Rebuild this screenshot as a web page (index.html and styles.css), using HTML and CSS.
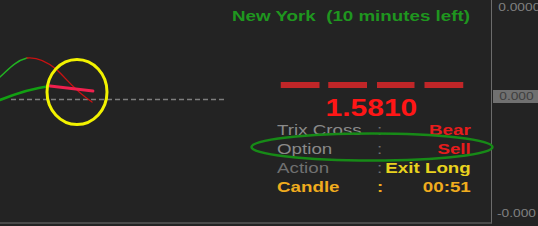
FILE: index.html
```html
<!DOCTYPE html>
<html>
<head>
<meta charset="utf-8">
<link rel="stylesheet" href="styles.css">
</head>
<body>
<div class="screen">
  <div class="plot">
    <svg class="lines" width="240" height="140" viewBox="0 0 240 140">
      <line x1="11" y1="99.5" x2="226" y2="99.5" class="zero"/>
      <path d="M0,77 C8,70 15,61 27,58" class="thin-green"/>
      <path d="M27,58 C36,57 46,61 56,69 C66,78 74,90 92,102" class="thin-red"/>
      <path d="M0,100 C15,94 34,88 50,86" class="thick-green"/>
      <path d="M50,86 L93,91" class="thick-pink"/>
      <ellipse cx="77" cy="92" rx="30" ry="32.5" class="ring-yellow"/>
    </svg>
    <div class="panel">
      <div class="title">New York&nbsp; (10 minutes left)</div>
      <div class="bars"><span></span><span></span><span></span><span></span></div>
      <div class="price">1.5810</div>
      <div class="rows">
        <div class="row"><span class="lbl">Trix Cross</span><span class="col">:</span><span class="val red">Bear</span></div>
        <div class="row"><span class="lbl">Option</span><span class="col">:</span><span class="val red">Sell</span></div>
        <div class="row"><span class="lbl dim">Action</span><span class="col">:</span><span class="val yellow">Exit Long</span></div>
        <div class="row gold"><span class="lbl">Candle</span><span class="col">:</span><span class="val">00:51</span></div>
      </div>
    </div>
    <svg class="ring" width="260" height="40" viewBox="0 0 260 40">
      <ellipse cx="130" cy="20" rx="120.5" ry="13.5"/>
    </svg>
  </div>
  <div class="axis">
    <div class="tick top">0.0000</div>
    <div class="tick current"><span>0.000</span></div>
    <div class="tick bottom">-0.000</div>
  </div>
</div>
</body>
</html>
```

FILE: styles.css
```css
html, body {
  margin: 0;
  padding: 0;
  background: #232323;
}
body {
  font-family: "Liberation Sans", Arial, sans-serif;
  overflow: hidden;
}
.screen {
  width: 538px;
  height: 226px;
  display: grid;
  grid-template-columns: 492px 46px;
  background: #232323;
}
.plot {
  position: relative;
  height: 224px;
  box-sizing: border-box;
  border-right: 1px solid #6c6c6c;
  border-bottom: 2px solid #4a4a4a;
}
.lines {
  position: absolute;
  left: 0;
  top: 0;
}
.lines path, .lines line, .lines ellipse { fill: none; stroke-linecap: round; }
.zero { stroke: #7d7d7d; stroke-width: 1.6; stroke-dasharray: 5 3; stroke-linecap: butt !important; }
.thin-green { stroke: #22b322; stroke-width: 1.5; }
.thin-red { stroke: #c81212; stroke-width: 1.4; }
.thick-green { stroke: #12a012; stroke-width: 2.6; }
.thick-pink { stroke: #f0204e; stroke-width: 2.8; }
.ring-yellow { stroke: #f2f200; stroke-width: 3; }

.ring {
  position: absolute;
  left: 242px;
  top: 127px;
}
.ring ellipse { fill: none; stroke: #178a17; stroke-width: 2.5; }

.panel {
  margin-left: 232px;
  padding-top: 7px;
  width: 223px;
  transform: scaleX(1.25);
  transform-origin: 0 0;
}
.title {
  font-size: 15px;
  line-height: 17px;
  font-weight: bold;
  color: #1f961f;
  white-space: nowrap;
}
.bars {
  display: flex;
  gap: 7.4px;
  margin-top: 58px;
  margin-left: 39.2px;
}
.bars span {
  width: 30.8px;
  height: 6px;
  background: #c02628;
}
.price {
  margin-top: 8px;
  text-align: center;
  font-size: 24px;
  line-height: 24px;
  font-weight: bold;
  color: #ff1616;
}
.rows {
  margin-left: 36px;
  width: 155px;
  margin-top: -0.5px;
}
.row {
  display: grid;
  grid-template-columns: 80px auto 1fr;
  font-size: 15px;
  line-height: 19px;
  color: #8a8a8a;
  white-space: nowrap;
}
.lbl.dim { color: #707070; }
.col { color: #6e6e6e; }
.val { text-align: right; font-weight: bold; }
.val.red { color: #e81c1c; }
.val.yellow { color: #e8d21e; }
.row.gold, .row.gold .col { color: #f0ac1e; font-weight: bold; }

.axis {
  position: relative;
  height: 222px;
  display: flex;
  flex-direction: column;
  overflow: hidden;
}
.axis::before {
  content: "";
  position: absolute;
  left: -5px;
  top: 97px;
  width: 5px;
  height: 1px;
  background: #8a8a8a;
}
.tick {
  font-size: 11px;
  line-height: 13px;
  color: #808080;
  white-space: nowrap;
}
.tick.top {
  padding-top: 1px;
  padding-left: 5px;
  transform: scaleX(1.25);
  transform-origin: 0 0;
}
.tick.current {
  margin-top: 76px;
  margin-left: 1px;
  height: 13px;
  background: #707070;
  color: #3e3e3e;
}
.tick.current span {
  display: block;
  padding-left: 5px;
  transform: scaleX(1.25);
  transform-origin: 0 0;
}
.tick.bottom {
  margin-top: auto;
  padding-bottom: 2px;
  padding-left: 4px;
  transform: scaleX(1.25);
  transform-origin: 0 0;
}
```
